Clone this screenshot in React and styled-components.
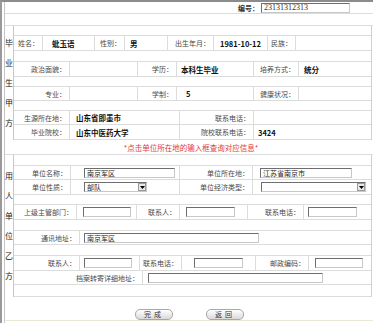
import React from "react";
import styled, { createGlobalStyle } from "styled-components";

const GlobalStyle = createGlobalStyle`
  html, body {
    margin: 0;
    padding: 0;
    background: #fff;
  }
  body {
    font-family: "Noto Sans CJK SC", "Noto Sans", sans-serif;
  }
`;

const Frame = styled.div`
  width: 373px;
  height: 323px;
  box-sizing: border-box;
  overflow: hidden;
  border-top: 2px solid #8c8c8c;
  border-left: 2px solid #9a9a9a;
  padding-left: 2px;
  background: #fff;
`;

const Inner = styled.div`
  height: 100%;
  border-left: 1px solid #c4c4c4;
  display: flex;
  flex-direction: column;
`;

const TopRow = styled.div`
  height: 12px;
  box-sizing: border-box;
  border-bottom: 1px solid #dcdcdc;
  display: flex;
  align-items: center;
  padding-left: 233px;
  gap: 2px;
`;

const NoLabel = styled.span`
  font-size: 7px;
  color: #333;
  font-weight: 700;
`;

const Blank = styled.div`
  height: ${(p) => p.$h}px;
  box-sizing: border-box;
  border-bottom: 1px solid #dcdcdc;
`;

const Section = styled.div`
  display: flex;
`;

const Side = styled.div`
  width: 8px;
  border-right: 1px solid #c8c8c8;
  display: flex;
  flex-direction: column;
  align-items: center;
  justify-content: center;
  gap: 12px;
  font-size: 8px;
  color: #222;
`;

const SideChar = styled.span`
  display: block;
  height: 8px;
  line-height: 8px;
`;

const Body = styled.div`
  flex: 1;
  margin-right: 1px;
  border-right: 1px solid #d0d0d0;
`;

const Row = styled.div`
  display: grid;
  grid-template-columns: ${(p) => p.$cols};
  height: ${(p) => p.$h}px;
  box-sizing: border-box;
  border-bottom: 1px solid #dcdcdc;
`;

const Cell = styled.div`
  display: flex;
  align-items: center;
  box-sizing: border-box;
  border-right: 1px solid #dcdcdc;
  white-space: nowrap;
  overflow: hidden;
  &:last-child {
    border-right: none;
  }
`;

const Label = styled(Cell)`
  justify-content: flex-end;
  padding-right: 3px;
  font-size: 7px;
  color: #4a4a4a;
`;

const Value = styled(Cell)`
  padding-left: ${(p) => p.$pad ?? 5}px;
  font-size: 7.5px;
  font-weight: 700;
  color: #111;
`;

const Field = styled(Cell)`
  padding-left: ${(p) => p.$pad ?? 5}px;
`;

const Input = styled.div`
  width: ${(p) => p.$w}px;
  height: 10px;
  box-sizing: border-box;
  border: 1px solid;
  border-color: #6e6e6e #c8c8c8 #c8c8c8 #6e6e6e;
  background: #fff;
  font-size: 7px;
  line-height: 8px;
  color: #222;
  padding-left: 2px;
  overflow: hidden;
`;

const NoInput = styled(Input)`
  font-family: "Liberation Serif", serif;
  font-size: 8px;
  color: #333;
`;

const Select = styled.div`
  width: ${(p) => p.$w}px;
  height: 10px;
  box-sizing: border-box;
  border: 1px solid;
  border-color: #6e6e6e #c8c8c8 #c8c8c8 #6e6e6e;
  display: flex;
  align-items: center;
  justify-content: space-between;
  font-size: 7px;
  color: #222;
  padding-left: 2px;
`;

const Arrow = styled.span`
  width: 8px;
  height: 8px;
  box-sizing: border-box;
  border: 1px solid #9a9a9a;
  background: #e8e8e8;
  display: flex;
  align-items: center;
  justify-content: center;
`;

const Hint = styled.div`
  height: 15px;
  box-sizing: border-box;
  border-bottom: 1px solid #dcdcdc;
  display: flex;
  align-items: center;
  justify-content: center;
  padding-left: 4px;
  font-size: 7.5px;
  color: #e03a3a;
`;

const Buttons = styled.div`
  flex: 1;
  display: flex;
  justify-content: center;
  align-items: flex-start;
  padding-top: 12px;
  padding-left: 1px;
  gap: 33px;
  border-bottom: 1px solid #ece8d8;
  margin-bottom: 2px;
`;

const Button = styled.button`
  width: 38px;
  height: 11px;
  padding: 0;
  border: 1px solid #a8a8a8;
  border-radius: 5px;
  background: linear-gradient(#ffffff, #d9d9d9);
  font-family: "Noto Sans CJK SC", sans-serif;
  font-size: 7px;
  line-height: 9px;
  letter-spacing: 3px;
  color: #333;
`;

const DropArrow = () => (
  <Arrow>
    <svg width="5" height="3" viewBox="0 0 5 3">
      <path d="M0 0 H5 L2.5 3 Z" fill="#000" />
    </svg>
  </Arrow>
);

const SideLabel = ({ text }) => (
  <Side>
    {text.split("").map((c, i) => (
      <SideChar key={i}>{c}</SideChar>
    ))}
  </Side>
);

export default function App() {
  return (
    <>
      <GlobalStyle />
      <Frame>
        <Inner>
          <TopRow>
            <NoLabel>编号：</NoLabel>
            <NoInput $w={89}>23131312313</NoInput>
          </TopRow>
          <Blank $h={12} />

          <Section>
            <SideLabel text="毕业生甲方" />
            <Body>
              <Blank $h={10} />
              <Row $h={15} $cols="29px 52px 30px 43px 46px 54px 28px 1fr">
                <Label>姓名：</Label>
                <Value $pad={9}>蚍玉语</Value>
                <Label>性别：</Label>
                <Value>男</Value>
                <Label>出生年月：</Label>
                <Value $pad={6}>1981-10-12</Value>
                <Label>民族：</Label>
                <Value />
              </Row>
              <Blank $h={11} />
              <Row $h={15} $cols="56px 68px 39px 77px 45px 1fr">
                <Label>政治面貌：</Label>
                <Value />
                <Label>学历：</Label>
                <Value $pad={4}>本科生毕业</Value>
                <Label>培养方式：</Label>
                <Value>统分</Value>
              </Row>
              <Blank $h={10} />
              <Row $h={14} $cols="56px 68px 39px 77px 45px 1fr">
                <Label>专业：</Label>
                <Value />
                <Label>学制：</Label>
                <Value $pad={9}>5</Value>
                <Label>健康状况：</Label>
                <Value />
              </Row>
              <Blank $h={10} />
              <Row $h={14} $cols="56px 110px 74px 1fr">
                <Label>生源所在地：</Label>
                <Value $pad={6}>山东省即墨市</Value>
                <Label>联系电话：</Label>
                <Value />
              </Row>
              <Row $h={15} $cols="56px 110px 74px 1fr">
                <Label>毕业院校：</Label>
                <Value $pad={6}>山东中医药大学</Value>
                <Label>院校联系电话：</Label>
                <Value $pad={4}>3424</Value>
              </Row>
            </Body>
          </Section>

          <Hint>*点击单位所在地的输入框查询对应信息*</Hint>

          <Section>
            <SideLabel text="用人单位乙方" />
            <Body>
              <Blank $h={11} />
              <Row $h={14} $cols="57px 109px 73px 1fr">
                <Label>单位名称：</Label>
                <Field $pad={13}>
                  <Input $w={91}>南京军区</Input>
                </Field>
                <Label>单位所在地：</Label>
                <Field $pad={7}>
                  <Input $w={92}>江苏省南京市</Input>
                </Field>
              </Row>
              <Row $h={15} $cols="57px 109px 73px 1fr">
                <Label>单位性质：</Label>
                <Field $pad={13}>
                  <Select $w={63}>
                    部队
                    <DropArrow />
                  </Select>
                </Field>
                <Label>单位经济类型：</Label>
                <Field $pad={8}>
                  <Select $w={105}>
                    <span />
                    <DropArrow />
                  </Select>
                </Field>
              </Row>
              <Blank $h={10} />
              <Row $h={15} $cols="63px 60px 43px 68px 56px 1fr">
                <Label>上级主管部门：</Label>
                <Field $pad={6}>
                  <Input $w={48} />
                </Field>
                <Label>联系人：</Label>
                <Field $pad={6}>
                  <Input $w={49} />
                </Field>
                <Label>联系电话：</Label>
                <Field $pad={4}>
                  <Input $w={49} />
                </Field>
              </Row>
              <Blank $h={11} />
              <Row $h={14} $cols="66px 1fr">
                <Label>通讯地址：</Label>
                <Field $pad={4}>
                  <Input $w={175}>南京军区</Input>
                </Field>
              </Row>
              <Blank $h={11} />
              <Row $h={15} $cols="66px 60px 42px 74px 53px 1fr">
                <Label>联系人：</Label>
                <Field $pad={4}>
                  <Input $w={48} />
                </Field>
                <Label>联系电话：</Label>
                <Field $pad={12}>
                  <Input $w={49} />
                </Field>
                <Label>邮政编码：</Label>
                <Field $pad={6}>
                  <Input $w={48} />
                </Field>
              </Row>
              <Row $h={14} $cols="129px 1fr">
                <Label>档案转寄详细地址：</Label>
                <Field $pad={5}>
                  <Input $w={175} />
                </Field>
              </Row>
              <Blank $h={12} />
            </Body>
          </Section>

          <Buttons>
            <Button>完成</Button>
            <Button>返回</Button>
          </Buttons>
        </Inner>
      </Frame>
    </>
  );
}
